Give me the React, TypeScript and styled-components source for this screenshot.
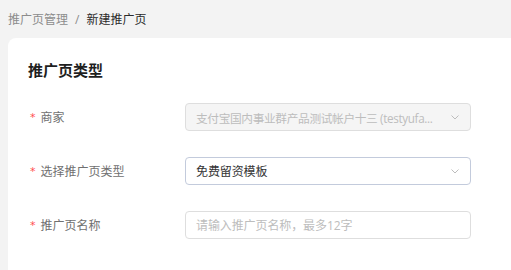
import styled, { createGlobalStyle } from "styled-components";

const GlobalStyle = createGlobalStyle`
  html, body {
    margin: 0;
    padding: 0;
    background: #f3f3f3;
    font-family: "Open Sans", "Noto Sans CJK SC", sans-serif;
  }
`;

const Page = styled.div`
  width: 511px;
  height: 270px;
  overflow: hidden;
  padding-left: 8px;
  box-sizing: border-box;
`;

const Breadcrumb = styled.nav`
  height: 38px;
  display: flex;
  align-items: center;
  gap: 7px;
  font-size: 12px;
  color: #8c8c8c;
`;

const Crumb = styled.span<{ $current?: boolean }>`
  color: ${(p) => (p.$current ? "#2b2b2b" : "#8c8c8c")};
`;

const Card = styled.section`
  background: #fff;
  border-top-left-radius: 8px;
  padding: 20px 40px 40px 20px;
  min-height: 260px;
`;

const Title = styled.h2`
  margin: 0 0 21px;
  font-size: 15px;
  font-weight: 700;
  color: #1f1f1f;
  line-height: 24px;
`;

const Form = styled.div`
  display: flex;
  flex-direction: column;
  gap: 26px;
`;

const Row = styled.div`
  display: grid;
  grid-template-columns: 157px 286px;
  align-items: center;
`;

const Label = styled.label`
  display: flex;
  align-items: center;
  font-size: 12px;
  color: #707070;
  padding-left: 2px;

  &::before {
    content: "*";
    color: #ff4d4f;
    margin-right: 5px;
    font-family: "DejaVu Sans", sans-serif;
    font-size: 11px;
  }
`;

const Field = styled.div<{ $disabled?: boolean; $active?: boolean }>`
  height: 28px;
  box-sizing: border-box;
  border: 1px solid ${(p) => (p.$active ? "#c3cbdc" : "#dedede")};
  border-radius: 4px;
  background: ${(p) => (p.$disabled ? "#f5f5f5" : "#fff")};
  display: flex;
  align-items: center;
  gap: 8px;
  padding: 0 10px;
  font-size: 12px;
`;

const Value = styled.span<{ $muted?: boolean; $tight?: boolean }>`
  flex: 1;
  min-width: 0;
  font-weight: 400;
  color: ${(p) => (p.$muted ? "#bdbdbd" : "#333")};
  white-space: nowrap;
  overflow: hidden;
  font-size: ${(p) => (p.$tight ? "11.7px" : "12px")};
  letter-spacing: ${(p) => (p.$tight ? "-0.35px" : "-0.1px")};
`;

const Chevron = () => (
  <svg width="10" height="10" viewBox="0 0 10 10" fill="none">
    <path d="M1.5 3.5 L5 7 L8.5 3.5" stroke="#bdbdbd" strokeWidth="1" />
  </svg>
);

export default function App() {
  return (
    <>
      <GlobalStyle />
      <Page>
        <Breadcrumb>
          <Crumb>推广页管理</Crumb>
          <span>/</span>
          <Crumb $current>新建推广页</Crumb>
        </Breadcrumb>
        <Card>
          <Title>推广页类型</Title>
          <Form>
            <Row>
              <Label>商家</Label>
              <Field $disabled>
                <Value $muted $tight>支付宝国内事业群产品测试帐户十三 (testyufa...</Value>
                <Chevron />
              </Field>
            </Row>
            <Row>
              <Label>选择推广页类型</Label>
              <Field $active>
                <Value>免费留资模板</Value>
                <Chevron />
              </Field>
            </Row>
            <Row>
              <Label>推广页名称</Label>
              <Field>
                <Value $muted>请输入推广页名称，最多12字</Value>
              </Field>
            </Row>
          </Form>
        </Card>
      </Page>
    </>
  );
}
